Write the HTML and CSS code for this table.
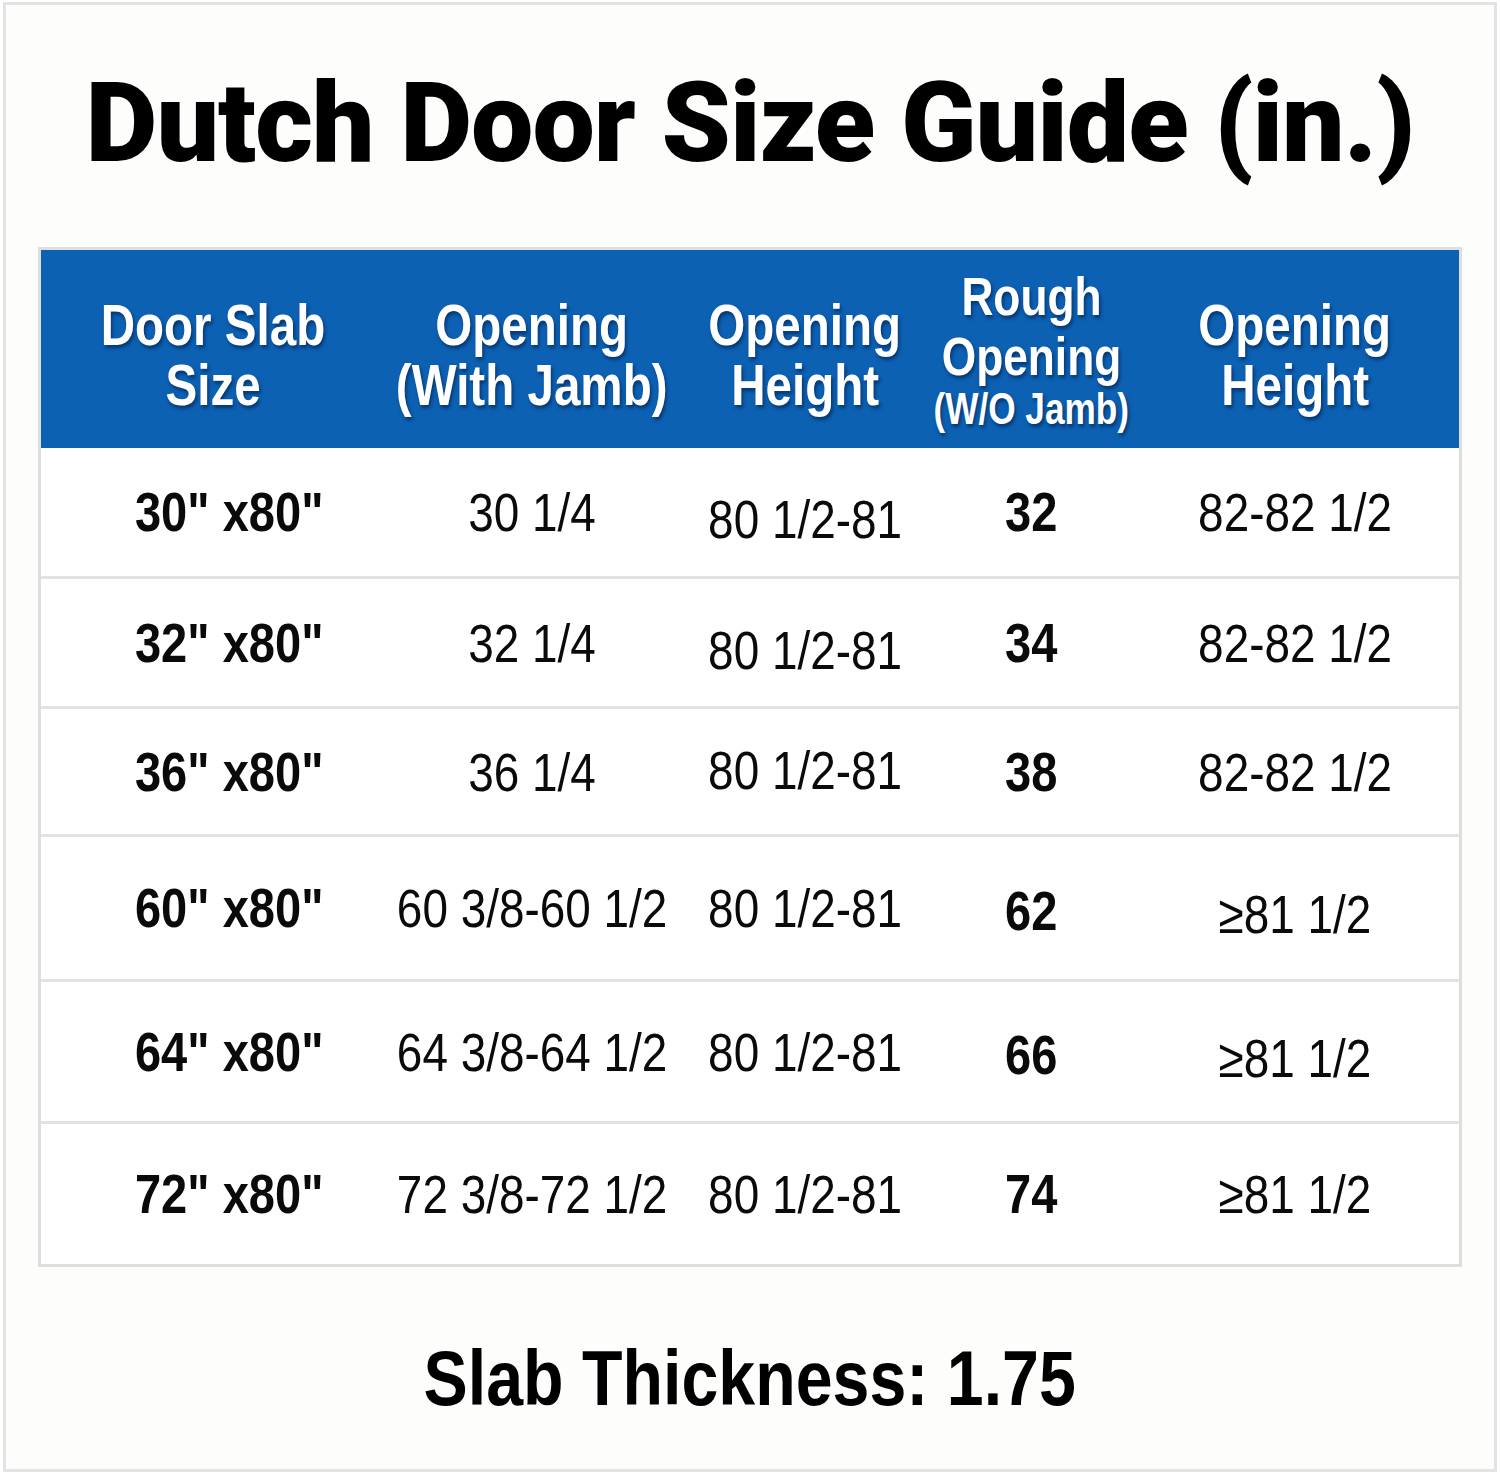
FILE: index.html
```html
<!DOCTYPE html>
<html lang="en">
<head>
<meta charset="utf-8">
<title>Dutch Door Size Guide</title>
<link rel="stylesheet" href="styles.css">
</head>
<body>
<div class="frame">
  <h1 class="title">Dutch Door Size Guide (in.)</h1>
  <div class="table">
    <div class="head">
      <div class="hcell"><span class="nar">Door Slab</span><span class="nar">Size</span></div>
      <div class="hcell"><span class="nar">Opening</span><span class="nar">(With Jamb)</span></div>
      <div class="hcell"><span class="nar">Opening</span><span class="nar">Height</span></div>
      <div class="hcell three"><span class="nar">Rough</span><span class="nar">Opening</span><span class="nar small">(W/O Jamb)</span></div>
      <div class="hcell"><span class="nar">Opening</span><span class="nar">Height</span></div>
    </div>
    <div class="row r1">
      <div class="cell c1"><span class="nar b">30" x80"</span></div>
      <div class="cell"><span class="nar">30 1/4</span></div>
      <div class="cell low"><span class="nar">80 1/2-81</span></div>
      <div class="cell"><span class="nar b">32</span></div>
      <div class="cell"><span class="nar">82-82 1/2</span></div>
    </div>
    <div class="row r2">
      <div class="cell c1"><span class="nar b">32" x80"</span></div>
      <div class="cell"><span class="nar">32 1/4</span></div>
      <div class="cell low"><span class="nar">80 1/2-81</span></div>
      <div class="cell"><span class="nar b">34</span></div>
      <div class="cell"><span class="nar">82-82 1/2</span></div>
    </div>
    <div class="row r3">
      <div class="cell c1"><span class="nar b">36" x80"</span></div>
      <div class="cell"><span class="nar">36 1/4</span></div>
      <div class="cell high"><span class="nar">80 1/2-81</span></div>
      <div class="cell"><span class="nar b">38</span></div>
      <div class="cell"><span class="nar">82-82 1/2</span></div>
    </div>
    <div class="row r4">
      <div class="cell c1"><span class="nar b">60" x80"</span></div>
      <div class="cell"><span class="nar">60 3/8-60 1/2</span></div>
      <div class="cell"><span class="nar">80 1/2-81</span></div>
      <div class="cell lift"><span class="nar b">62</span></div>
      <div class="cell lift2"><span class="nar">≥81 1/2</span></div>
    </div>
    <div class="row r5">
      <div class="cell c1"><span class="nar b">64" x80"</span></div>
      <div class="cell"><span class="nar">64 3/8-64 1/2</span></div>
      <div class="cell"><span class="nar">80 1/2-81</span></div>
      <div class="cell lift"><span class="nar b">66</span></div>
      <div class="cell lift2"><span class="nar">≥81 1/2</span></div>
    </div>
    <div class="row r6">
      <div class="cell c1"><span class="nar b">72" x80"</span></div>
      <div class="cell"><span class="nar">72 3/8-72 1/2</span></div>
      <div class="cell"><span class="nar">80 1/2-81</span></div>
      <div class="cell"><span class="nar b">74</span></div>
      <div class="cell"><span class="nar">≥81 1/2</span></div>
    </div>
  </div>
  <p class="foot"><span class="nar">Slab Thickness: 1.75</span></p>
</div>
</body>
</html>
```

FILE: styles.css
```css
html, body {
  margin: 0;
  padding: 0;
  background: #ffffff;
}

.frame {
  box-sizing: border-box;
  width: 1494px;
  height: 1470px;
  margin: 2px 3px;
  border: 3px solid #e3e3e3;
  background: #fdfdfc;
  display: flex;
  flex-direction: column;
}

.title {
  margin: 62px 0 0;
  font-family: Roboto, "Liberation Sans", sans-serif;
  font-weight: 900;
  font-size: 111px;
  line-height: 113px;
  text-align: center;
  color: #000;
  letter-spacing: -1px;
}

.table {
  margin: 67px 32px 0;
  border: 3px solid #dedede;
  background: #ffffff;
}

.nar {
  display: inline-block;
  transform: scaleX(0.85);
  white-space: nowrap;
}

.head,
.row {
  display: grid;
  grid-template-columns: 344px 294px 252px 200px 1fr;
}

.head {
  height: 198px;
  background: #0c61b3;
  color: #ffffff;
  font-family: "Liberation Sans", Arial, sans-serif;
  font-weight: 700;
  font-size: 58px;
  line-height: 60px;
  text-shadow: 2px 3px 4px rgba(0, 20, 60, 0.55);
}

.hcell {
  display: flex;
  flex-direction: column;
  align-items: center;
  justify-content: center;
  padding-top: 12px;
  box-sizing: border-box;
}

.hcell .nar {
  transform: scaleX(0.82);
}

.hcell.three {
  font-size: 54px;
  line-height: 60px;
  padding-top: 0;
  padding-bottom: 0;
}

.hcell .small {
  font-size: 44px;
  line-height: 46px;
  transform: scaleX(0.8);
}

.row {
  border-top: 3px solid #e2e2e2;
  font-family: "Liberation Sans", Arial, sans-serif;
  font-size: 54px;
  line-height: 60px;
  color: #0a0a0a;
}

.row.r1 { border-top: 0; height: 128px; }
.row.r2 { height: 127px; }
.row.r3 { height: 125px; }
.row.r4 { height: 142px; }
.row.r5 { height: 139px; }
.row.r6 { height: 140px; }

.cell {
  display: flex;
  align-items: center;
  justify-content: center;
}

.cell.c1 {
  padding-left: 32px;
}

.cell.low {
  padding-top: 14px;
}

.cell.high {
  padding-bottom: 4px;
}

.cell.lift {
  padding-top: 6px;
}

.cell.lift2 {
  padding-top: 12px;
}

.nar.b {
  font-weight: 700;
  font-size: 56px;
  transform: scaleX(0.84);
}

.foot {
  margin: 72px 0 0;
  text-align: center;
  font-family: "Liberation Sans", Arial, sans-serif;
  font-weight: 700;
  font-size: 78px;
  line-height: 78px;
  color: #000;
}
```
